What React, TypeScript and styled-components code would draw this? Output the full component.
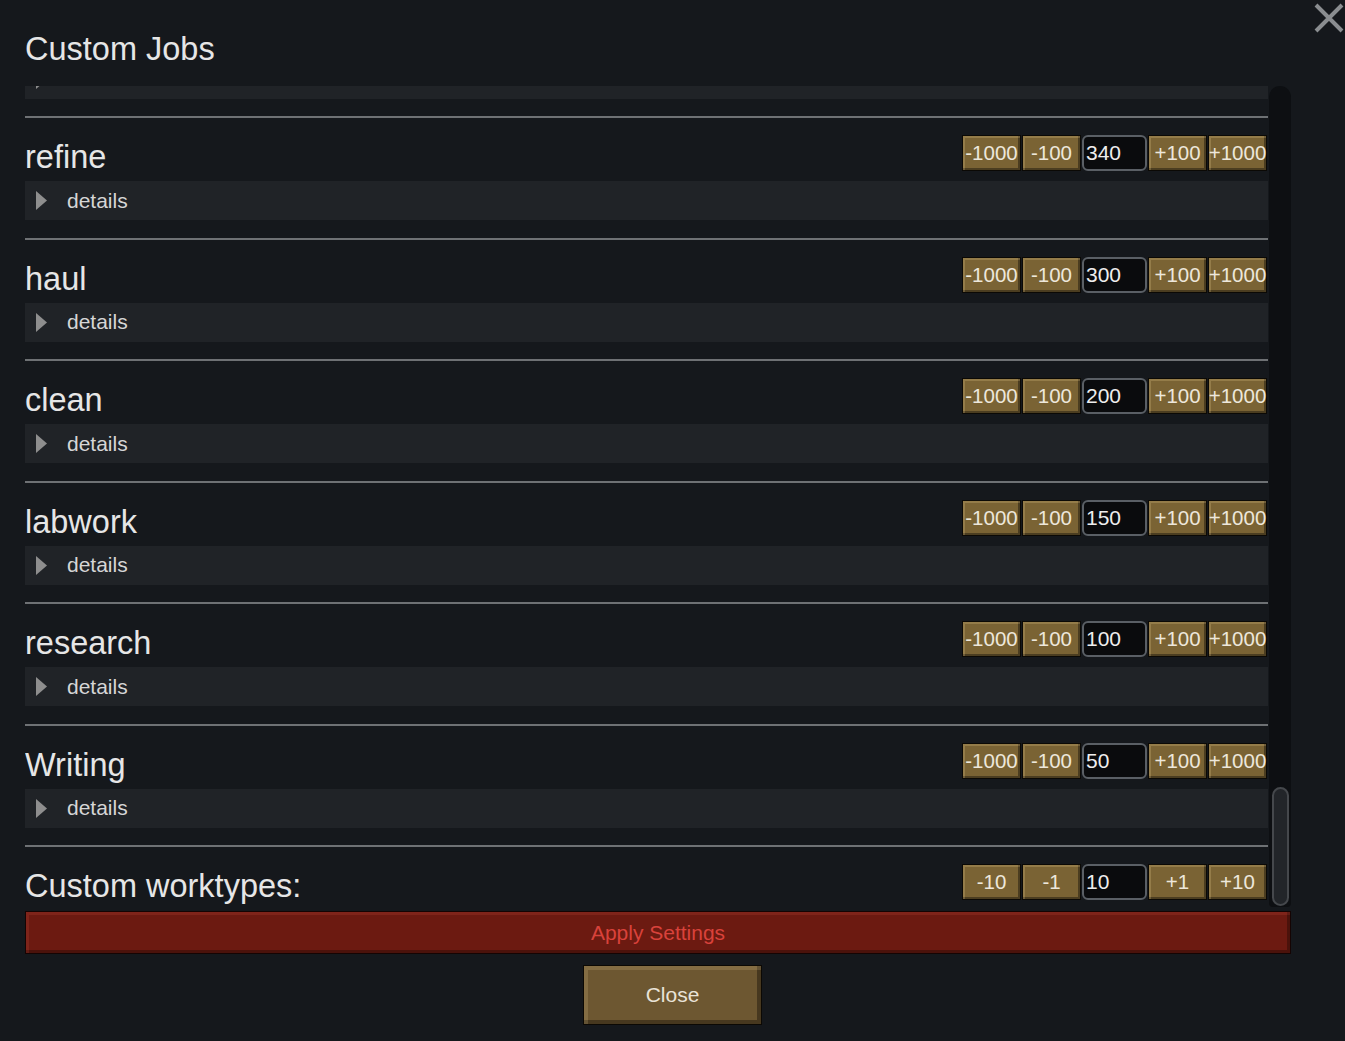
import React from "react";
import styled, { createGlobalStyle } from "styled-components";

const GlobalStyle = createGlobalStyle`
  html, body {
    margin: 0;
    padding: 0;
    background: #15181c;
    overflow: hidden;
  }
  * { box-sizing: border-box; }
`;

const Page = styled.div`
  position: relative;
  height: 100vh;
  background: #15181c;
  padding-top: 31px;
  font-family: "Liberation Sans", Arial, sans-serif;
  color: #e4e4e4;
`;

const CloseX = styled.button`
  position: absolute;
  top: 3px;
  right: 1px;
  width: 30px;
  height: 30px;
  padding: 0;
  border: none;
  background: transparent;
  cursor: pointer;
  display: flex;
  align-items: center;
  justify-content: center;
`;

const Content = styled.div`
  padding: 0 54px 0 25px;
  display: flex;
  flex-direction: column;
`;

const Heading = styled.h1`
  margin: 0;
  font-size: 32.5px;
  line-height: 36px;
  font-weight: 400;
  color: #e6e6e6;
`;

const ScrollArea = styled.div`
  margin-top: 19px;
  height: 821px;
  display: flex;
  gap: 1px;
`;

const Viewport = styled.div`
  flex: 1;
  min-width: 0;
  overflow: hidden;
  display: flex;
  flex-direction: column;
  justify-content: flex-end;
`;

const Track = styled.div`
  width: 22px;
  flex-shrink: 0;
  background: #0d0f12;
  border-radius: 11px 11px 4px 4px;
  display: flex;
  flex-direction: column;
  justify-content: flex-end;
  align-items: center;
  padding-bottom: 1px;
`;

const Thumb = styled.div`
  width: 17px;
  height: 119px;
  border-radius: 9px;
  background: #222529;
  border: 2px solid #45484c;
`;

const Section = styled.section<{ $last?: boolean }>`
  flex-shrink: 0;
  display: flex;
  flex-direction: column;
  padding-bottom: ${(p) => (p.$last ? "3px" : "17.5px")};
`;

const Divider = styled.div`
  height: 2px;
  background: #6e7174;
`;

const Row = styled.div`
  margin-top: 17px;
  height: 40px;
  display: flex;
  justify-content: space-between;
  align-items: flex-start;
  padding-right: 1px;
`;

const JobTitle = styled.h2`
  margin: 4px 0 0 0;
  font-size: 32.5px;
  line-height: 36px;
  font-weight: 400;
  color: #e6e6e6;
  white-space: nowrap;
`;

const Controls = styled.div`
  display: flex;
  gap: 1px;
`;

const StepButton = styled.button`
  width: 59px;
  height: 36px;
  padding: 0;
  border: 1px solid #0b0905;
  background: #7a6334;
  box-shadow: inset 2px 2px 0 rgba(255, 225, 160, 0.2),
    inset -2px -2px 0 rgba(0, 0, 0, 0.38);
  color: #ede7db;
  font-family: "Liberation Sans", Arial, sans-serif;
  font-size: 20.5px;
  line-height: 34px;
  text-align: center;
  white-space: nowrap;
  display: flex;
  align-items: center;
  justify-content: center;
  cursor: pointer;
`;

const ValueInput = styled.input`
  width: 65px;
  height: 36px;
  padding: 0 2px;
  border: 2px solid #5a5f65;
  border-radius: 6px;
  background: #0a0b0d;
  color: #eeeeee;
  font-family: "Liberation Sans", Arial, sans-serif;
  font-size: 21px;
  outline: none;
`;

const DetailsBar = styled.div`
  margin-top: 6px;
  height: 39px;
  background: #202327;
  display: flex;
  align-items: center;
  padding-left: 11px;
  gap: 20px;
  color: #d6d6d6;
  font-size: 21px;
  cursor: pointer;
`;

const ApplyButton = styled.button`
  margin-top: 4px;
  width: 100%;
  height: 43px;
  border: 1px solid #150403;
  background: #6c1a11;
  box-shadow: inset 3px 3px 0 rgba(255, 110, 90, 0.13),
    inset -3px -3px 0 rgba(0, 0, 0, 0.3);
  color: #d9423b;
  font-family: "Liberation Sans", Arial, sans-serif;
  font-size: 21px;
  cursor: pointer;
`;

const Footer = styled.div`
  margin-top: 11px;
  display: flex;
  justify-content: center;
`;

const CloseButton = styled.button`
  width: 179px;
  height: 60px;
  border: 1px solid #0c0904;
  background: #6d5731;
  box-shadow: inset 4px 4px 0 rgba(255, 225, 160, 0.16),
    inset -4px -4px 0 rgba(0, 0, 0, 0.35);
  color: #e9e3d7;
  font-family: "Liberation Sans", Arial, sans-serif;
  font-size: 21px;
  cursor: pointer;
`;

type Job = { name: string; value: number };

const jobs: Job[] = [
  { name: "smith", value: 400 },
  { name: "refine", value: 340 },
  { name: "haul", value: 300 },
  { name: "clean", value: 200 },
  { name: "labwork", value: 150 },
  { name: "research", value: 100 },
  { name: "Writing", value: 50 },
];

const Triangle = () => (
  <svg width="11" height="19" viewBox="0 0 11 19" aria-hidden="true">
    <polygon points="0,0 11,9.5 0,19" fill="#8e8e8e" />
  </svg>
);

const Stepper = ({ value, big }: { value: number; big: boolean }) => {
  const dec = big ? ["-1000", "-100"] : ["-10", "-1"];
  const inc = big ? ["+100", "+1000"] : ["+1", "+10"];
  return (
    <Controls>
      {dec.map((d) => (
        <StepButton key={d}>{d}</StepButton>
      ))}
      <ValueInput defaultValue={String(value)} />
      {inc.map((d) => (
        <StepButton key={d}>{d}</StepButton>
      ))}
    </Controls>
  );
};

export default function App() {
  return (
    <>
      <GlobalStyle />
      <Page>
        <CloseX aria-label="close">
          <svg width="30" height="30" viewBox="0 0 30 30">
            <path d="M2 2 L28 28 M28 2 L2 28" stroke="#8a8d90" strokeWidth="4" />
          </svg>
        </CloseX>
        <Content>
          <Heading>Custom Jobs</Heading>
          <ScrollArea>
            <Viewport>
              {jobs.map((j) => (
                <Section key={j.name}>
                  <Divider />
                  <Row>
                    <JobTitle>{j.name}</JobTitle>
                    <Stepper value={j.value} big />
                  </Row>
                  <DetailsBar>
                    <Triangle />
                    <span>details</span>
                  </DetailsBar>
                </Section>
              ))}
              <Section $last>
                <Divider />
                <Row>
                  <JobTitle>Custom worktypes:</JobTitle>
                  <Stepper value={10} big={false} />
                </Row>
              </Section>
            </Viewport>
            <Track>
              <Thumb />
            </Track>
          </ScrollArea>
          <ApplyButton>Apply Settings</ApplyButton>
        </Content>
        <Footer>
          <CloseButton>Close</CloseButton>
        </Footer>
      </Page>
    </>
  );
}
